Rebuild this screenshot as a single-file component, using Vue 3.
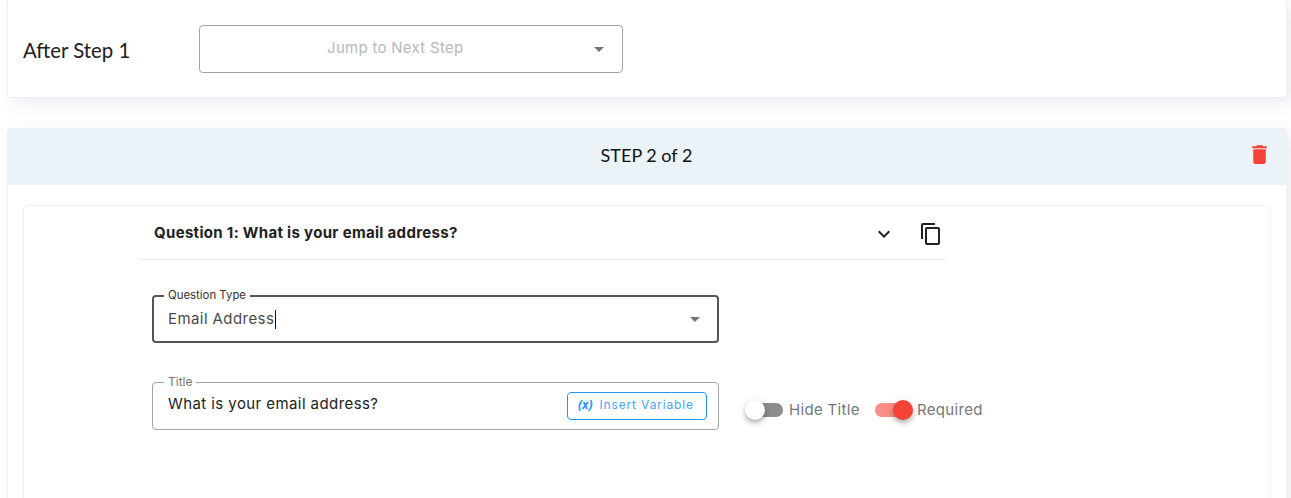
<template>
  <div class="page">
    <section class="card after-card">
      <h3 class="after-title">After Step 1</h3>
      <div class="field jump-select">
        <span class="placeholder">Jump to Next Step</span>
        <svg class="caret" viewBox="0 0 24 24"><path d="M7 10l5 5 5-5z" /></svg>
      </div>
    </section>

    <section class="card step-card">
      <header class="step-header">
        <span class="step-title">STEP 2 of 2</span>
        <button class="delete" aria-label="Delete step">
          <svg viewBox="0 0 24 24"><path d="M6 19c0 1.1.9 2 2 2h8c1.1 0 2-.9 2-2V7H6v12zM19 4h-3.500l-1-1h-5l-1 1H5v2h14V4z" /></svg>
        </button>
      </header>

      <div class="panel">
        <div class="question-head">
          <h4 class="question-title">Question 1: What is your email address?</h4>
          <svg class="chevron" viewBox="0 0 24 24"><path d="M7.410 8.580L12 13.170l4.590-4.590L18 10l-6 6-6-6 1.410-1.420z" /></svg>
          <svg class="copy" viewBox="0 0 24 24"><path d="M19 21H8V7h11m0-2H8a2 2 0 0 0-2 2v14a2 2 0 0 0 2 2h11a2 2 0 0 0 2-2V7a2 2 0 0 0-2-2m-3-4H4a2 2 0 0 0-2 2v14h2V3h12V1z" /></svg>
        </div>

        <div class="question-body">
          <div class="field focused">
            <label class="label type-label">Question Type</label>
            <span class="value type-value">Email Address</span>
            <span class="cursor"></span>
            <svg class="caret" viewBox="0 0 24 24"><path d="M7 10l5 5 5-5z" /></svg>
          </div>

          <div class="title-row">
            <div class="field">
              <label class="label title-label">Title</label>
              <span class="value title-value">{{ title }}</span>
              <button class="insert"><b class="insert-icon">(x)</b><span>Insert Variable</span></button>
            </div>
            <div v-for="item in switches" :key="item.label" class="switch" :class="{ on: item.on }" @click="item.on = !item.on">
              <span class="track"><span class="thumb"></span></span>
              <span class="switch-label">{{ item.label }}</span>
            </div>
          </div>
        </div>
      </div>
    </section>
  </div>
</template>

<script setup>
import { ref } from 'vue';

const title = ref('What is your email address?');
const switches = ref([
  { label: 'Hide Title', on: false },
  { label: 'Required', on: true },
]);
</script>

<style>
body {
  background: #fff;
  overflow: hidden;
}
</style>

<style scoped>
.page,
.page * {
  box-sizing: border-box;
}

.page {
  height: 498px;
  padding: 0 4px 0 7px;
  overflow: hidden;
  color: #212121;
  font-family: Inter, "Liberation Sans", sans-serif;
}

.card {
  width: 1280px;
  background: #fff;
  border: 1px solid #f0f0f2;
  border-radius: 4px;
  box-shadow: 6px 5px 16px rgba(98, 88, 160, 0.12);
}

.after-card {
  display: flex;
  height: 98px;
  padding: 25px 15px 0;
  border-top: 0;
  border-radius: 0 0 4px 4px;
}

.after-title {
  width: 176px;
  margin: 0;
  font: 400 20.4px/50px Lato, sans-serif;
  white-space: nowrap;
}

.field {
  position: relative;
  display: flex;
  align-items: center;
  width: 567px;
  height: 48px;
  padding: 0 11px 0 15px;
  border: 1px solid #a3a3a3;
  border-radius: 4px;
}

.jump-select {
  width: 424px;
  padding-right: 11.5px;
}

.placeholder {
  flex: 1;
  padding: 0 11px 4px 0;
  color: #b8b8b8;
  font-size: 15px;
  letter-spacing: 0.28px;
  text-align: center;
}

.caret {
  width: 24px;
  height: 24px;
  margin-left: auto;
  fill: #757575;
}

.step-card {
  height: 400px;
  margin-top: 30px;
}

.step-header {
  display: grid;
  grid-template-columns: 1fr auto 1fr;
  align-items: center;
  height: 56px;
  padding: 0 14px 0 26px;
  padding-left: 13px;
  background: #ebf3f9;
  border-radius: 3px 3px 0 0;
}

.step-title {
  grid-column: 2;
  padding-bottom: 4px;
  color: #111;
  font: 400 18px/24px Lato, sans-serif;
}

.delete {
  justify-self: end;
  width: 25px;
  height: 25px;
  margin-bottom: 6px;
  padding: 0;
  background: none;
  border: 0;
}

.delete svg {
  display: block;
  width: 25px;
  height: 25px;
  fill: #f44336;
}

.panel {
  height: 320px;
  margin: 20px 15px 0;
  border: 1px solid #f0f0f0;
  border-radius: 5px;
}

.question-head {
  display: flex;
  align-items: center;
  width: 807px;
  height: 54px;
  margin-left: 115px;
  padding: 0 3px 0 15px;
  border-bottom: 1px solid #eee;
}

.question-title {
  flex: 1;
  margin: 0;
  font-size: 15px;
  font-weight: 700;
  letter-spacing: 0.32px;
  white-space: nowrap;
}

.chevron {
  width: 24px;
  height: 24px;
  margin: 2px 23px 0 0;
  fill: #212121;
}

.copy {
  width: 24px;
  height: 24px;
  margin-top: 2px;
  fill: #212121;
}

.question-body {
  padding: 35px 0 0 128px;
}

.focused {
  padding: 0 10px 0 14px;
  border: 2px solid #555;
}

.label {
  position: absolute;
  top: -8px;
  left: 11px;
  padding: 0 4px;
  background: #fff;
  color: #777;
  font-size: 12px;
  line-height: 14px;
  white-space: nowrap;
}

.focused .label {
  top: -9px;
  left: 10px;
  color: #333;
}

.type-label {
  font-size: 11.4px;
}

.value {
  font-size: 15px;
  letter-spacing: 0.42px;
  line-height: 20px;
  white-space: nowrap;
}

.type-value {
  color: #4a4a4a;
}

.title-value {
  padding-bottom: 4px;
}

.cursor {
  width: 1px;
  height: 19px;
  margin-left: 1px;
  background: #111;
}

.title-row {
  display: flex;
  align-items: center;
  margin-top: 39px;
}

.insert {
  display: flex;
  align-items: center;
  gap: 7px;
  width: 140px;
  height: 28px;
  margin-left: auto;
  padding: 0 0 2px 10px;
  background: #fff;
  border: 1px solid #2196f3;
  border-radius: 4px;
  color: #46a6f5;
  font: 400 12px/20px Inter, sans-serif;
  letter-spacing: 0.85px;
  white-space: nowrap;
}

.insert-icon {
  color: #2196f3;
  font: italic 700 12px/20px "Open Sans", sans-serif;
  letter-spacing: 0;
}

.switch {
  display: flex;
  align-items: center;
  padding-top: 8px;
  margin-left: 28px;
}

.switch + .switch {
  margin-left: 16px;
}

.track {
  position: relative;
  width: 36px;
  height: 14px;
  background: #8c8c8c;
  border-radius: 7px;
}

.thumb {
  position: absolute;
  top: -3px;
  left: -2px;
  width: 20px;
  height: 20px;
  background: #fff;
  border-radius: 50%;
  box-shadow: 0 2px 4px -1px rgba(0, 0, 0, 0.2), 0 4px 5px rgba(0, 0, 0, 0.14), 0 1px 10px rgba(0, 0, 0, 0.12);
}

.on .track {
  background: #fa8e86;
}

.on .thumb {
  left: 18px;
  background: #f44336;
}

.switch-label {
  width: 70px;
  margin-left: 6px;
  color: #777;
  font-size: 15px;
  letter-spacing: 0.33px;
  line-height: 20px;
  white-space: nowrap;
}
</style>
